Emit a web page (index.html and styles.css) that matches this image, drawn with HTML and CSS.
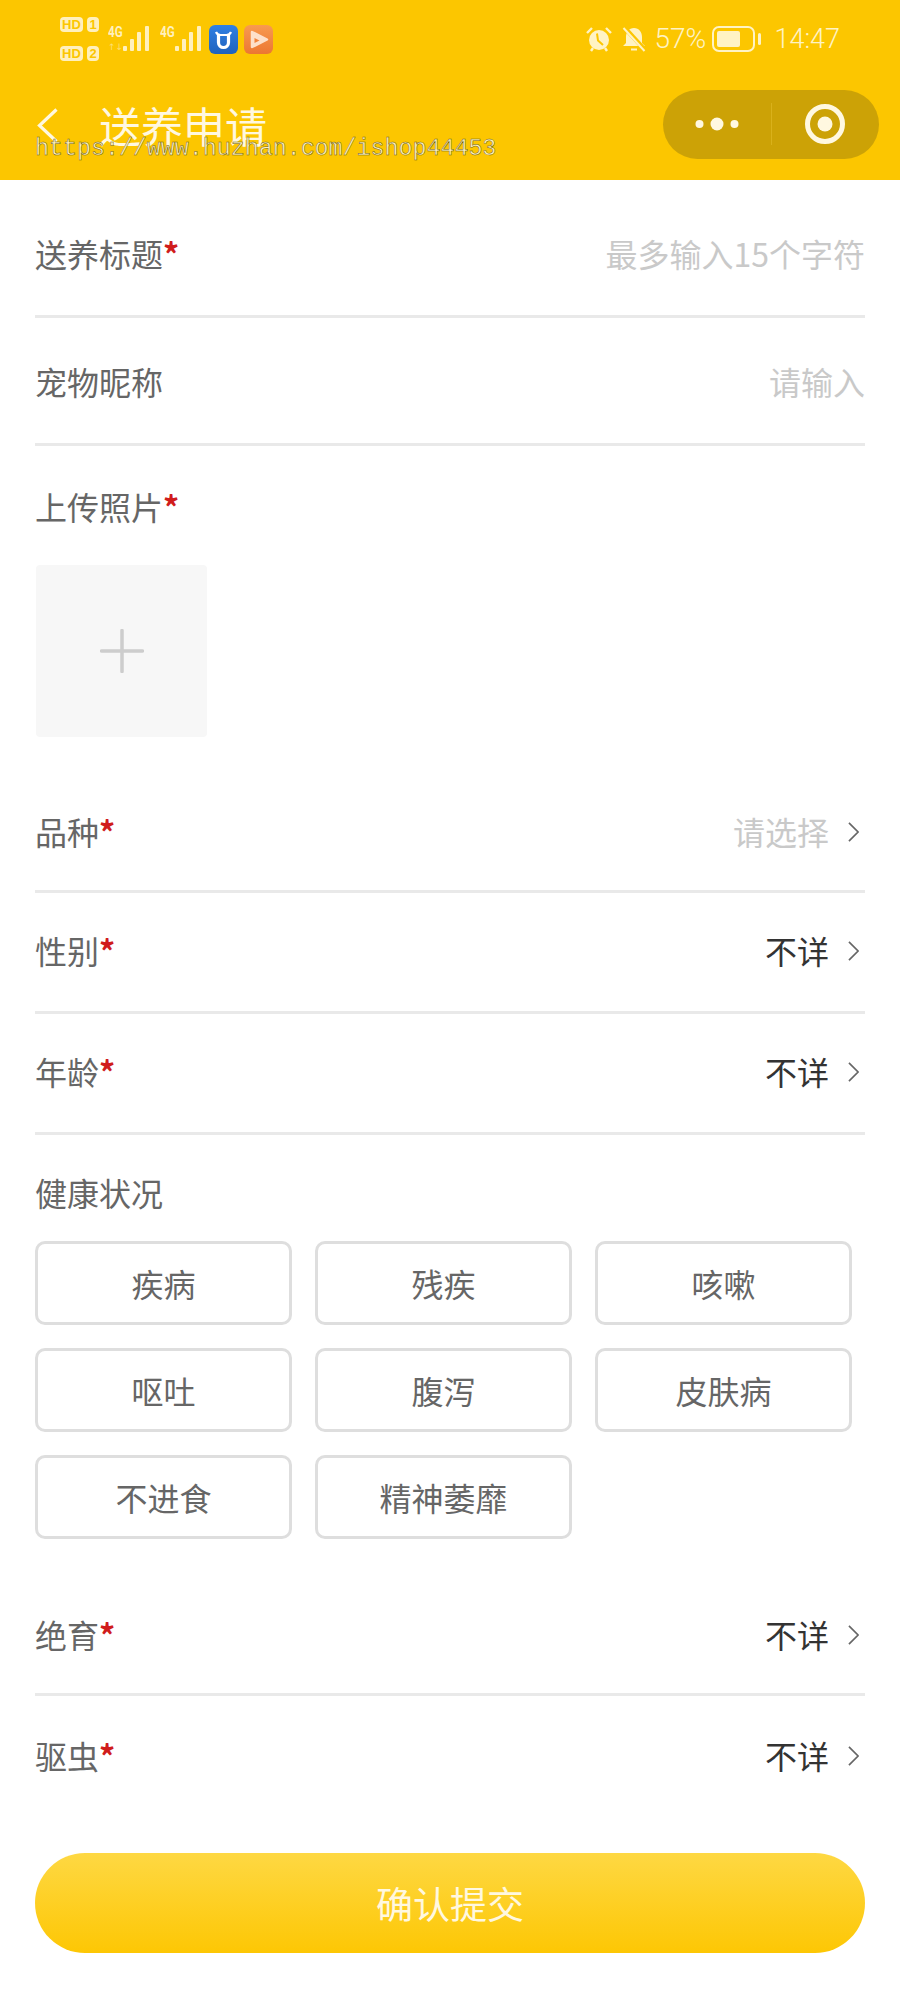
FILE: index.html
```html
<!DOCTYPE html>
<html lang="zh">
<head>
<meta charset="utf-8">
<title>送养申请</title>
<link rel="stylesheet" href="styles.css">
</head>
<body>
<header class="top">
  <div class="status">
    <div class="status-left">
      <div class="hd-stack">
        <div class="hd"><span class="hd-box">HD</span><span class="hd-num">1</span></div>
        <div class="hd"><span class="hd-box">HD</span><span class="hd-num">2</span></div>
      </div>
      <div class="net">
        <div class="net-col"><span class="net-label">4G</span><span class="net-arrows">↑↓</span></div>
        <svg class="bars" viewBox="0 0 27 26"><g fill="#fff0bd"><rect x="0" y="20" width="4" height="5" rx="1"/><rect x="7" y="13" width="4" height="12" rx="1"/><rect x="14" y="6" width="4" height="19" rx="1"/><rect x="22" y="0" width="4" height="25" rx="1"/></g></svg>
      </div>
      <div class="net">
        <div class="net-col"><span class="net-label">4G</span></div>
        <svg class="bars" viewBox="0 0 27 26"><g fill="#fff0bd"><rect x="0" y="20" width="4" height="5" rx="1"/><rect x="7" y="13" width="4" height="12" rx="1"/><rect x="14" y="6" width="4" height="19" rx="1"/><rect x="22" y="0" width="4" height="25" rx="1"/></g></svg>
      </div>
      <svg class="app" viewBox="0 0 29 29"><defs><linearGradient id="gb" x1="0" y1="0" x2="0" y2="1"><stop offset="0" stop-color="#2f80e4"/><stop offset="1" stop-color="#1f62bd"/></linearGradient></defs><rect width="29" height="29" rx="6" fill="url(#gb)"/><path d="M9.500 10v7.500a5 5 0 0 0 10 0V10" fill="none" stroke="#fff" stroke-width="3.200"/><path d="M7 7c1 2.500 3 3 4.500 3h6c1.500 0 3.500-.5 4.500-3" fill="none" stroke="#fff" stroke-width="2.200"/></svg>
      <svg class="app app-b" viewBox="0 0 29 29"><defs><linearGradient id="go" x1="0" y1="0" x2="0" y2="1"><stop offset="0" stop-color="#f89a50"/><stop offset="1" stop-color="#ec7732"/></linearGradient></defs><rect width="29" height="29" rx="6" fill="url(#go)"/><path d="M8 7 23 14.500 8 22 Z" fill="#fde0ca" stroke="#fde0ca" stroke-width="2.500" stroke-linejoin="round"/><path d="M10.500 13l5 2.500-5 2.500z" fill="#f2843e"/></svg>
    </div>
    <div class="status-right">
      <svg class="ico-alarm" viewBox="0 0 28 26"><circle cx="14" cy="14" r="10" fill="#fff3c4"/><path d="M12 7.500l1 7 5 4.500" fill="none" stroke="#fcc600" stroke-width="2"/><path d="M2 7l5-5M26 7l-5-5M6 25l2-3M22 25l-2-3" stroke="#fff3c4" stroke-width="2.400"/></svg>
      <svg class="ico-bell" viewBox="0 0 26 26"><path d="M13 2c-5 0-8 4-8 9v6l-3 3h22l-3-3v-6c0-5-3-9-8-9z" fill="#fff3c4"/><path d="M10 22.500h6v2h-6z" fill="#fff3c4"/><path d="M3 1l21 23" stroke="#fcc600" stroke-width="4.500"/><path d="M2.500 2l21 23" stroke="#fff3c4" stroke-width="2"/></svg>
      <span class="pct">57%</span>
      <svg class="ico-batt" viewBox="0 0 50 26"><rect x="1" y="1" width="41" height="24" rx="6" fill="none" stroke="#fff3c4" stroke-width="2"/><rect x="5" y="5" width="23" height="16" rx="2" fill="#fff3c4"/><rect x="46" y="7" width="3" height="12" rx="1.500" fill="#fff3c4"/></svg>
      <span class="time">14:47</span>
    </div>
  </div>
  <div class="nav">
    <svg class="back" viewBox="0 0 21 35"><path d="M19.500 1.500 2.500 17.500l17 16" fill="none" stroke="#fff8e0" stroke-width="3.200"/></svg>
    <h1 class="title">送养申请</h1>
    <div class="capsule">
      <div class="cap-part"><svg class="dots" viewBox="0 0 44 16"><circle cx="4.500" cy="8" r="4" fill="#fff8e0"/><circle cx="22" cy="8" r="6.500" fill="#fff8e0"/><circle cx="39.500" cy="8" r="4" fill="#fff8e0"/></svg></div>
      <div class="cap-div"></div>
      <div class="cap-part"><svg class="target" viewBox="0 0 40 40"><circle cx="20" cy="20" r="17.500" fill="none" stroke="#fff8e0" stroke-width="5"/><circle cx="20" cy="20" r="7.500" fill="#fff8e0"/></svg></div>
    </div>
  </div>
  <div class="watermark">https://www.huzhan.com/ishop44453</div>
</header>

<main class="form">
  <div class="row row-a"><div class="label">送养标题<i class="req">*</i></div><div class="hint">最多输入15个字符</div></div>
  <div class="row row-b"><div class="label">宠物昵称</div><div class="hint">请输入</div></div>

  <section class="upload">
    <div class="label">上传照片<i class="req">*</i></div>
    <div class="pic"><svg class="plus" viewBox="0 0 44 44"><path d="M22 1.500v41M1.500 22h41" stroke="#cdcdcd" stroke-width="3.500" stroke-linecap="round"/></svg></div>
  </section>

  <div class="row row-c"><div class="label">品种<i class="req">*</i></div><div class="value"><span class="hint">请选择</span><svg class="arrow" viewBox="0 0 12 22"><path d="M1 1l10 10L1 21" fill="none" stroke="#666" stroke-width="1.800"/></svg></div></div>
  <div class="row row-d"><div class="label">性别<i class="req">*</i></div><div class="value"><span>不详</span><svg class="arrow" viewBox="0 0 12 22"><path d="M1 1l10 10L1 21" fill="none" stroke="#666" stroke-width="1.800"/></svg></div></div>
  <div class="row row-d"><div class="label">年龄<i class="req">*</i></div><div class="value"><span>不详</span><svg class="arrow" viewBox="0 0 12 22"><path d="M1 1l10 10L1 21" fill="none" stroke="#666" stroke-width="1.800"/></svg></div></div>

  <section class="health">
    <div class="label">健康状况</div>
    <div class="chips">
      <div class="chip">疾病</div><div class="chip">残疾</div><div class="chip">咳嗽</div>
      <div class="chip">呕吐</div><div class="chip">腹泻</div><div class="chip">皮肤病</div>
      <div class="chip">不进食</div><div class="chip">精神萎靡</div>
    </div>
  </section>

  <div class="row row-e"><div class="label">绝育<i class="req">*</i></div><div class="value"><span>不详</span><svg class="arrow" viewBox="0 0 12 22"><path d="M1 1l10 10L1 21" fill="none" stroke="#666" stroke-width="1.800"/></svg></div></div>
  <div class="row row-f"><div class="label">驱虫<i class="req">*</i></div><div class="value"><span>不详</span><svg class="arrow" viewBox="0 0 12 22"><path d="M1 1l10 10L1 21" fill="none" stroke="#666" stroke-width="1.800"/></svg></div></div>

  <button class="submit" type="button">确认提交</button>
</main>
</body>
</html>
```
FILE: styles.css
```css
* { box-sizing: border-box; }
html, body { margin: 0; padding: 0; }
body {
  width: 900px;
  height: 2000px;
  overflow: hidden;
  background: #fff;
  font-family: "Noto Sans CJK SC", "Noto Sans", sans-serif;
  font-size: 32px;
  color: #333;
}

/* header */
.top {
  position: relative;
  height: 180px;
  background: #fcc600;
  color: #fff3c4;
}
.status {
  height: 76px;
  display: flex;
  justify-content: space-between;
  padding: 17px 60px 0 60px;
}
.status-left { display: flex; align-items: flex-start; }
.status-right { display: flex; align-items: flex-start; padding-top: 9px; }

.hd-stack { display: flex; flex-direction: column; gap: 14px; width: 48px; }
.hd { display: flex; gap: 4px; height: 15px; align-items: center; }
.hd-box, .hd-num {
  background: #fff0bd;
  color: #fcc600;
  border-radius: 4px;
  font-family: "Liberation Sans", sans-serif;
  font-weight: 700;
  font-size: 13px;
  line-height: 15px;
  height: 15px;
  text-align: center;
}
.hd-box { width: 23px; }
.hd-num { width: 12px; }

.net { display: flex; width: 52px; align-items: flex-start; padding-top: 9px; }
.net-col { width: 15px; display: flex; flex-direction: column; }
.net-label {
  font-family: "Roboto", sans-serif;
  font-weight: 700;
  font-size: 15px;
  line-height: 12px;
  width: 20px;
  transform: scaleX(0.78);
  transform-origin: left center;
  color: #fff0bd;
}
.net-arrows {
  font-family: "DejaVu Sans", sans-serif;
  font-size: 9px;
  line-height: 10px;
  margin-top: 4px;
  color: #fddf70;
  white-space: nowrap;
}
.bars { width: 27px; height: 26px; flex: none; }
.app { width: 29px; height: 29px; margin-top: 8px; margin-left: -3px; }
.app-b { margin-left: 6px; }

.ico-alarm { width: 28px; height: 26px; }
.ico-bell { width: 26px; height: 26px; margin-left: 8px; }
.pct { font-size: 28px; line-height: 26px; margin-left: 7px; width: 52px; font-family: "Roboto", sans-serif; font-weight: 300; white-space: nowrap; }
.ico-batt { width: 50px; height: 26px; margin-left: 6px; }
.time { font-size: 27px; line-height: 26px; margin-left: 12px; font-family: "Roboto", sans-serif; font-weight: 300; }

.nav {
  height: 104px;
  display: flex;
  align-items: center;
  padding: 0 21px 8px 37px;
}
.back { width: 21px; height: 35px; margin-top: 2px; }
.title {
  margin: 2px 0 0 41px;
  font-size: 42px;
  font-weight: 400;
  line-height: 60px;
  color: #fff8e0;
  flex: 1;
}
.capsule {
  width: 216px;
  height: 69px;
  border-radius: 35px;
  background: #cca206;
  display: flex;
  align-items: center;
}
.cap-part { flex: 1; display: flex; justify-content: center; align-items: center; }
.cap-div { width: 1px; height: 42px; background: #d9b11b; }
.dots { width: 44px; height: 16px; }
.target { width: 40px; height: 40px; }

.watermark {
  position: absolute;
  left: 35px;
  top: 132px;
  font-family: "Liberation Mono", monospace;
  font-size: 23.300px;
  line-height: 34px;
  color: #fff3c0;
  -webkit-text-stroke: 0.500px #6b5a10;
  white-space: nowrap;
}

/* form */
.form { padding: 0 35px; display: flex; flex-direction: column; }
.label { color: #666; line-height: 46px; }
.req { color: #d01c1c; font-style: normal; font-weight: 700; }
.hint { color: #c9c9c9; }

.row {
  display: flex;
  align-items: center;
  justify-content: space-between;
  border-bottom: 3px solid #e9e9e9;
}
.row-a { height: 138px; padding-top: 10px; }
.row-b { height: 128px; }
.row-c { height: 122px; }
.row-d { height: 121px; padding-bottom: 5px; }
.row-e { height: 97px; padding-bottom: 25px; }
.row-f { height: 122px; border-bottom: 0; padding-bottom: 4px; }

.value { display: flex; align-items: center; color: #333; }
.arrow { width: 11px; height: 20px; margin-left: 19px; margin-right: 6px; margin-top: 2px; }

.upload { padding-top: 37px; height: 325px; }
.pic {
  margin: 36px 0 0 1px;
  width: 171px;
  height: 172px;
  border-radius: 4px;
  background: #f7f7f7;
  display: flex;
  align-items: center;
  justify-content: center;
}
.plus { width: 44px; height: 44px; }

.health { padding-top: 34px; height: 464px; }
.chips {
  margin-top: 26px;
  display: grid;
  grid-template-columns: repeat(3, 257px);
  column-gap: 23px;
  row-gap: 23px;
  grid-auto-rows: 84px;
}
.chip {
  border: 3px solid #dedede;
  border-radius: 10px;
  display: flex;
  align-items: center;
  justify-content: center;
  color: #666;
}

.submit {
  margin-top: 35px;
  width: 830px;
  height: 100px;
  border: 0;
  border-radius: 50px;
  background: linear-gradient(180deg, #fed843 0%, #fdc704 100%);
  color: #fff8e0;
  font-family: inherit;
  font-size: 37px;
}
```
